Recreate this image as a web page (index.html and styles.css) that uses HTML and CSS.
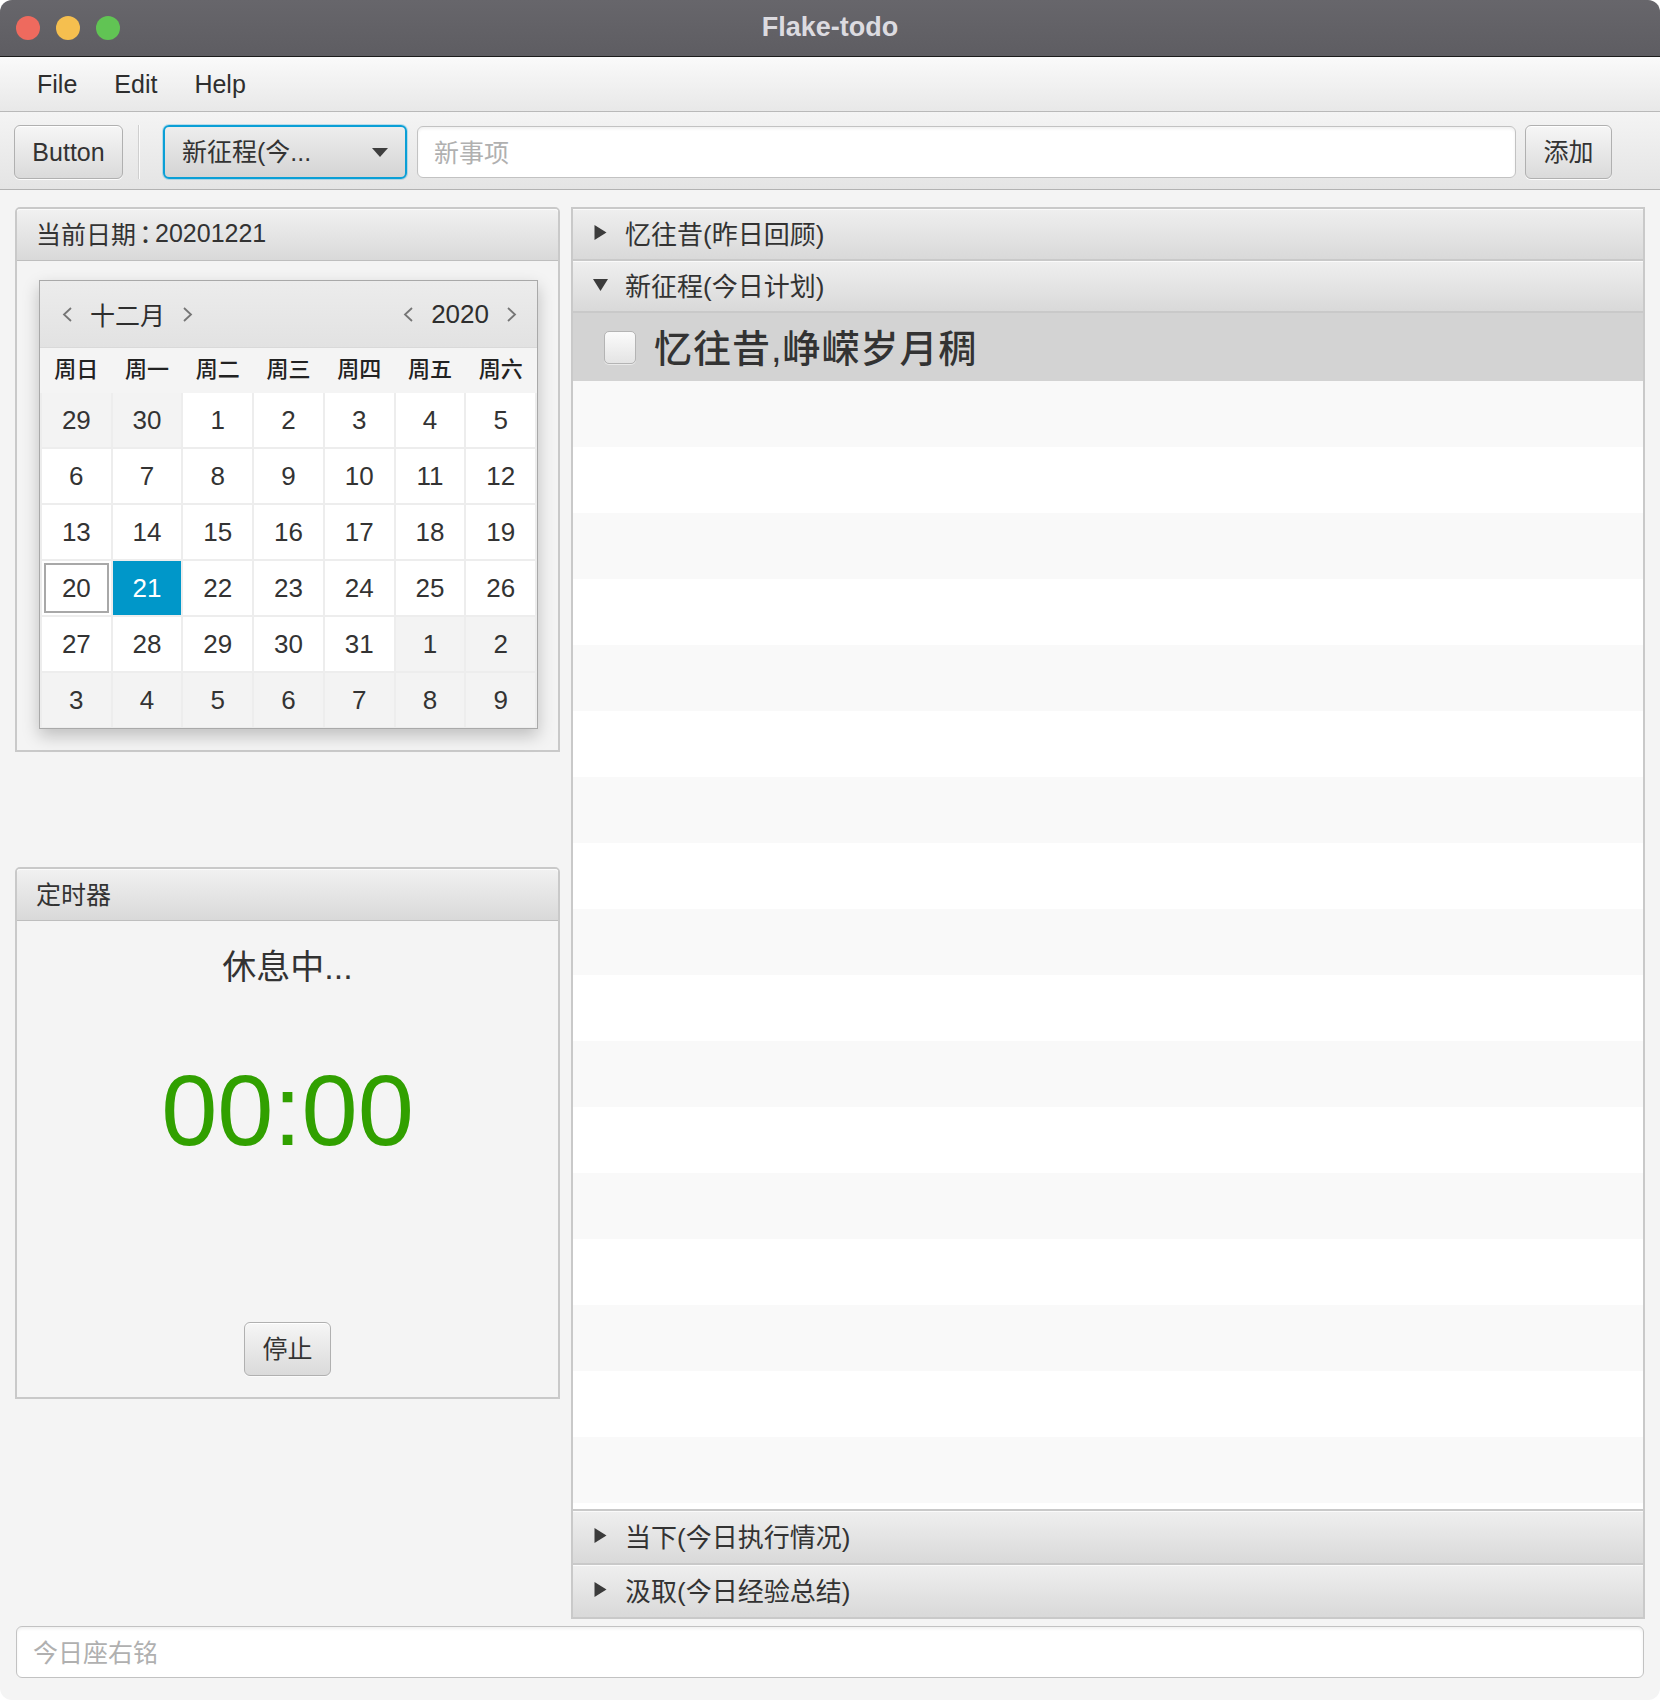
FILE: index.html
```html
<!DOCTYPE html>
<html lang="zh">
<head>
<meta charset="utf-8">
<title>Flake-todo</title>
<link rel="stylesheet" href="styles.css">
</head>
<body>
<div class="window">
  <div class="titlebar">
    <div class="lights">
      <span class="light red"></span>
      <span class="light yellow"></span>
      <span class="light green"></span>
    </div>
    <div class="title">Flake-todo</div>
    <div></div>
  </div>
  <div class="menubar">
    <span class="menu">File</span>
    <span class="menu">Edit</span>
    <span class="menu">Help</span>
  </div>
  <div class="toolbar">
    <button class="btn btn-main">Button</button>
    <div class="sep"></div>
    <div class="combo">
      <span class="combo-text">新征程(今...</span>
      <span class="combo-arrow"></span>
    </div>
    <div class="tfield tfield-new"><span class="placeholder">新事项</span></div>
    <button class="btn btn-add cjk">添加</button>
  </div>
  <div class="content">
    <div class="main">
      <div class="left">
        <section class="pane pane-date">
          <div class="pane-head">当前日期<span class="colon">：</span>20201221</div>
          <div class="date-body">
            <div class="calendar">
              <div class="cal-head">
                <div class="cal-group">
                  <svg class="chev" width="11" height="15" viewBox="0 0 11 15"><polyline points="9,1 2,7.5 9,14"/></svg>
                  <span class="cal-label">十二月</span>
                  <svg class="chev" width="11" height="15" viewBox="0 0 11 15"><polyline points="2,1 9,7.5 2,14"/></svg>
                </div>
                <div class="cal-group">
                  <svg class="chev" width="11" height="15" viewBox="0 0 11 15"><polyline points="9,1 2,7.5 9,14"/></svg>
                  <span class="cal-label year">2020</span>
                  <svg class="chev" width="11" height="15" viewBox="0 0 11 15"><polyline points="2,1 9,7.5 2,14"/></svg>
                </div>
              </div>
              <div class="cal-week">
                <span>周日</span><span>周一</span><span>周二</span><span>周三</span><span>周四</span><span>周五</span><span>周六</span>
              </div>
              <div class="cal-grid">
                <span class="cell other">29</span><span class="cell other">30</span><span class="cell">1</span><span class="cell">2</span><span class="cell">3</span><span class="cell">4</span><span class="cell">5</span>
                <span class="cell">6</span><span class="cell">7</span><span class="cell">8</span><span class="cell">9</span><span class="cell">10</span><span class="cell">11</span><span class="cell">12</span>
                <span class="cell">13</span><span class="cell">14</span><span class="cell">15</span><span class="cell">16</span><span class="cell">17</span><span class="cell">18</span><span class="cell">19</span>
                <span class="cell today">20</span><span class="cell sel">21</span><span class="cell">22</span><span class="cell">23</span><span class="cell">24</span><span class="cell">25</span><span class="cell">26</span>
                <span class="cell">27</span><span class="cell">28</span><span class="cell">29</span><span class="cell">30</span><span class="cell">31</span><span class="cell other">1</span><span class="cell other">2</span>
                <span class="cell other">3</span><span class="cell other">4</span><span class="cell other">5</span><span class="cell other">6</span><span class="cell other">7</span><span class="cell other">8</span><span class="cell other">9</span>
              </div>
            </div>
          </div>
        </section>
        <section class="pane pane-timer">
          <div class="pane-head">定时器</div>
          <div class="timer-body">
            <div class="status">休息中...</div>
            <div class="clock">00:00</div>
            <button class="btn btn-stop cjk">停止</button>
          </div>
        </section>
      </div>
      <div class="accordion">
        <div class="acc-head">
          <svg class="tri" width="12" height="15" viewBox="0 0 12 15"><polygon points="0,0 12,7.5 0,15"/></svg>
          <span>忆往昔(昨日回顾)</span>
        </div>
        <div class="acc-head">
          <svg class="tri" width="15" height="12" viewBox="0 0 15 12"><polygon points="0,0 15,0 7.5,12"/></svg>
          <span>新征程(今日计划)</span>
        </div>
        <div class="acc-list">
          <div class="row selected">
            <span class="checkbox"></span>
            <span class="task">忆往昔,峥嵘岁月稠</span>
          </div>
          <div class="row"></div><div class="row"></div><div class="row"></div><div class="row"></div>
          <div class="row"></div><div class="row"></div><div class="row"></div><div class="row"></div>
          <div class="row"></div><div class="row"></div><div class="row"></div><div class="row"></div>
          <div class="row"></div><div class="row"></div><div class="row"></div><div class="row"></div>
          <div class="row"></div><div class="row"></div>
        </div>
        <div class="acc-head acc-bottom">
          <svg class="tri" width="12" height="15" viewBox="0 0 12 15"><polygon points="0,0 12,7.5 0,15"/></svg>
          <span>当下(今日执行情况)</span>
        </div>
        <div class="acc-head acc-bottom">
          <svg class="tri" width="12" height="15" viewBox="0 0 12 15"><polygon points="0,0 12,7.5 0,15"/></svg>
          <span>汲取(今日经验总结)</span>
        </div>
      </div>
    </div>
    <div class="tfield motto"><span class="placeholder">今日座右铭</span></div>
  </div>
</div>
</body>
</html>
```

FILE: styles.css
```css
html, body {
  margin: 0;
  padding: 0;
  background: #ffffff;
}

body {
  font-family: "Liberation Sans", "Noto Sans CJK SC", sans-serif;
  color: #333333;
}

.window {
  width: 1660px;
  height: 1700px;
  background: #f4f4f4;
  border-radius: 12px;
  overflow: hidden;
  display: flex;
  flex-direction: column;
}

/* title bar */
.titlebar {
  height: 56px;
  flex: none;
  border-bottom: 1px solid #1c1c1c;
  background: linear-gradient(#67666b, #5e5d62);
  display: grid;
  grid-template-columns: 1fr auto 1fr;
  align-items: center;
}

.lights {
  display: flex;
  gap: 16px;
  padding-left: 16px;
}

.light {
  width: 24px;
  height: 24px;
  border-radius: 50%;
}

.red { background: #ee6a5e; }
.yellow { background: #f5bf4f; }
.green { background: #61c454; }

.title {
  font-weight: bold;
  font-size: 27px;
  color: #dcdbe0;
  padding-bottom: 2px;
}

/* menu bar */
.menubar {
  height: 54px;
  flex: none;
  border-bottom: 1px solid #b9b9b9;
  background: linear-gradient(#fafafa, #e8e8e8);
  display: flex;
  align-items: center;
  padding-left: 18px;
  font-size: 25px;
}

.menu {
  padding: 0 18px 0 19px;
  color: #2e2e2e;
}

/* toolbar */
.toolbar {
  height: 64px;
  flex: none;
  padding: 13px 0 0 14px;
  border-bottom: 1px solid #b2b2b2;
  background: linear-gradient(#f4f4f4, #e4e4e4);
  display: flex;
  align-items: flex-start;
}

.btn {
  height: 54px;
  box-sizing: border-box;
  border: 1px solid #b0b0b0;
  border-radius: 6px;
  background: linear-gradient(#f6f6f6, #dadada);
  box-shadow: inset 0 1px 0 #ffffff, 0 1px 0 #fbfbfb;
  font-family: inherit;
  font-size: 25px;
  color: #333333;
  padding: 0;
}

.btn.cjk { padding-bottom: 4px; }

.btn-main { width: 109px; }

.sep {
  width: 2px;
  height: 54px;
  margin: 0 23px 0 15px;
  background: linear-gradient(to right, #cfcfcf 50%, #fbfbfb 50%);
}

.combo {
  width: 244px;
  height: 54px;
  box-sizing: border-box;
  border: 2px solid #0a9fd6;
  border-radius: 6px;
  background: linear-gradient(#ededed, #d4d4d4);
  box-shadow: 0 0 0 1px rgba(10, 159, 214, 0.25);
  display: flex;
  align-items: center;
  padding: 0 17px 0 17px;
  font-size: 25px;
}

.combo-text { padding-bottom: 4px; }

.combo-arrow {
  margin-left: auto;
  width: 0;
  height: 0;
  border-left: 8px solid transparent;
  border-right: 8px solid transparent;
  border-top: 9px solid #3e3e3e;
}

.tfield {
  box-sizing: border-box;
  height: 52px;
  border: 1px solid #c2c2c2;
  border-radius: 6px;
  background: #ffffff;
  box-shadow: inset 0 2px 3px rgba(0, 0, 0, 0.06);
  display: flex;
  align-items: center;
  padding: 0 0 3px 16px;
}

.tfield-new {
  width: 1099px;
  margin: 1px 0 0 10px;
}

.placeholder {
  font-size: 25px;
  color: #b0b0b0;
}

.btn-add {
  width: 87px;
  margin-left: 9px;
}

/* content */
.content {
  flex: 1;
  min-height: 0;
  display: flex;
  flex-direction: column;
  gap: 7px;
  padding: 17px 15px 22px 15px;
}

.main {
  flex: 1;
  min-height: 0;
  display: flex;
  gap: 11px;
}

.left {
  width: 545px;
  flex: none;
  display: flex;
  flex-direction: column;
  gap: 115px;
}

.pane {
  box-sizing: border-box;
  border: 2px solid #c9c9c9;
  border-radius: 5px 5px 0 0;
  background: #f4f4f4;
  display: flex;
  flex-direction: column;
}

.pane-date { height: 545px; }
.pane-timer { height: 532px; }

.pane-head {
  height: 52px;
  box-sizing: border-box;
  flex: none;
  border-bottom: 1px solid #bebebe;
  border-radius: 3px 3px 0 0;
  background: linear-gradient(#f1f1f1, #d9d9d9);
  box-shadow: inset 0 1px 0 #fbfbfb;
  display: flex;
  align-items: center;
  padding: 0 0 3px 19px;
  font-size: 25px;
  color: #333333;
}

.colon {
  font-family: "Noto Sans CJK TC", sans-serif;
  margin: 0 -3px;
}

.date-body {
  padding: 19px 0 0 22px;
}

/* calendar */
.calendar {
  width: 499px;
  box-sizing: border-box;
  border: 1px solid #a9a9a9;
  background: #f4f4f4;
  box-shadow: 0 7px 16px rgba(0, 0, 0, 0.22);
}

.cal-head {
  height: 66px;
  border-bottom: 1px solid #d9d9d9;
  background: linear-gradient(#ececec, #e2e2e2);
  display: flex;
  justify-content: space-between;
  align-items: center;
  padding: 0 20px 0 22px;
}

.cal-group {
  display: flex;
  align-items: center;
  gap: 17px;
}

.chev polyline {
  fill: none;
  stroke: #757575;
  stroke-width: 1.8;
}

.cal-label {
  font-size: 25px;
  color: #2e2e2e;
}

.cal-label.year { font-size: 26px; }

.cal-week {
  height: 45px;
  box-sizing: border-box;
  display: grid;
  grid-template-columns: repeat(7, 1fr);
  gap: 2px;
  padding: 0 2px 8px 2px;
  align-items: center;
  text-align: center;
  font-size: 22px;
  font-weight: 500;
  color: #222222;
}

.cal-grid {
  display: grid;
  grid-template-columns: repeat(7, 1fr);
  grid-auto-rows: 54px;
  gap: 2px;
  padding: 0 2px 1px 2px;
  background: #ededed;
}

.cell {
  display: flex;
  align-items: center;
  justify-content: center;
  background: #ffffff;
  font-size: 26px;
  color: #333333;
}

.cell.other { background: #f3f3f3; }

.cell.today {
  outline: 2px solid #a8a8a8;
  outline-offset: -4px;
}

.cell.sel {
  background: #0097c9;
  color: #ffffff;
}

/* timer */
.timer-body {
  flex: 1;
  display: flex;
  flex-direction: column;
  align-items: center;
}

.status {
  margin-top: 26px;
  font-size: 34px;
  line-height: 40px;
  color: #333333;
}

.clock {
  margin-top: 68px;
  font-size: 101px;
  line-height: 110px;
  color: #31a000;
}

.btn-stop {
  width: 87px;
  margin-top: auto;
  margin-bottom: 21px;
}

/* accordion */
.accordion {
  flex: 1;
  min-width: 0;
  display: flex;
  flex-direction: column;
  border: 2px solid #c9c9c9;
  background: #f4f4f4;
}

.acc-head {
  height: 52px;
  box-sizing: border-box;
  flex: none;
  border-bottom: 2px solid #c9c9c9;
  background: linear-gradient(#efefef, #d9d9d9);
  box-shadow: inset 0 1px 0 #fafafa;
  display: flex;
  align-items: center;
  padding: 0 0 3px 20px;
  gap: 17px;
  font-size: 26px;
  color: #333333;
}

.acc-head .tri {
  width: 15px;
  display: block;
}

.tri polygon { fill: #3b3b3b; }

.acc-bottom {
  height: 54px;
  border-bottom: none;
  border-top: 2px solid #c9c9c9;
}

.acc-list {
  flex: 1;
  min-height: 0;
  overflow: hidden;
  background: #ffffff;
}

.row {
  height: 66px;
}

.row:nth-child(even) { background: #f9f9f9; }

.row.selected {
  height: 68px;
  background: #d3d3d3;
  display: flex;
  align-items: center;
  padding-left: 31px;
  gap: 18px;
}

.checkbox {
  width: 32px;
  height: 33px;
  box-sizing: border-box;
  border: 1px solid #b4b4b4;
  border-radius: 5px;
  background: linear-gradient(#fbfbfb, #e4e4e4);
  box-shadow: 0 1px 0 #eaeaea;
}

.task {
  font-size: 38px;
  font-weight: 500;
  color: #333333;
  letter-spacing: 1px;
  padding-bottom: 3px;
}

.motto {
  flex: none;
  margin: 0 1px;
}
```
